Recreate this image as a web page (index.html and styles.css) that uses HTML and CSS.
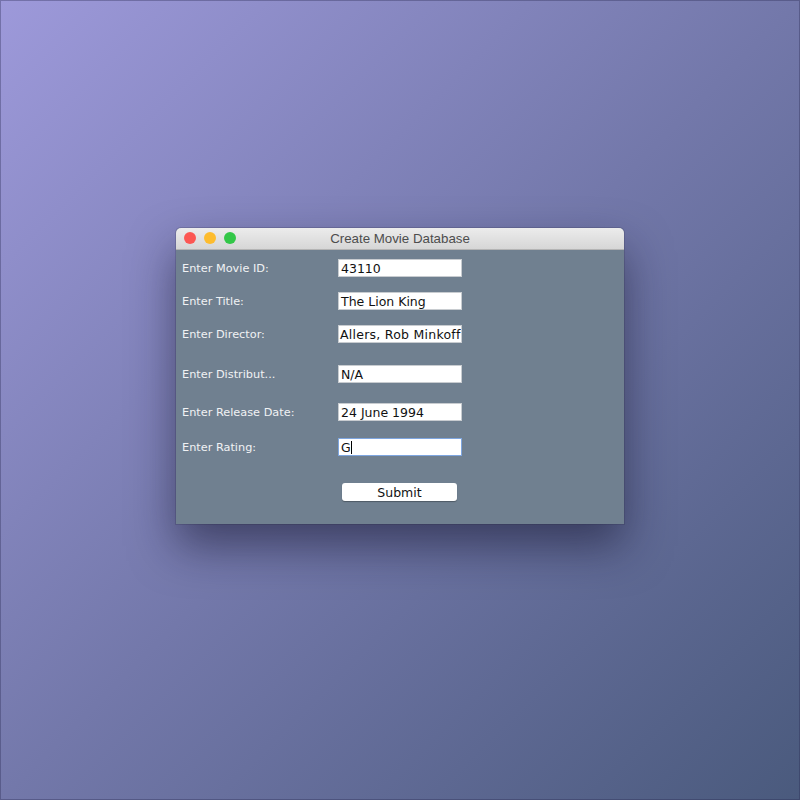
FILE: index.html
```html
<!DOCTYPE html>
<html lang="en">
<head>
    <meta charset="UTF-8">
    <title>Create Movie Database</title>
    <link rel="stylesheet" href="styles.css">
</head>
<body>
    <div class="window">
        <div class="titlebar">
            <div class="lights">
                <span class="light close"></span>
                <span class="light min"></span>
                <span class="light max"></span>
            </div>
            <div class="title">Create Movie Database</div>
        </div>

        <div class="form">
            <label class="label">Enter Movie ID:</label>
            <div class="field">43110</div>

            <label class="label">Enter Title:</label>
            <div class="field">The Lion King</div>

            <label class="label">Enter Director:</label>
            <div class="field scrolled">Allers, Rob Minkoff</div>

            <label class="label">Enter Distribut...</label>
            <div class="field">N/A</div>

            <label class="label">Enter Release Date:</label>
            <div class="field">24 June 1994</div>

            <label class="label">Enter Rating:</label>
            <div class="field focused">G<span class="caret"></span></div>

            <div class="spacer"></div>
            <button class="submit-btn">Submit</button>
        </div>
    </div>
</body>
</html>
```

FILE: styles.css
```css
* {
    margin: 0;
    padding: 0;
    box-sizing: border-box;
}

body {
    font-family: "DejaVu Sans", "Noto Sans", sans-serif;
    background: linear-gradient(135deg, #9d99da 0%, #7378aa 50%, #4a5a7d 100%);
    min-height: 100vh;
    display: flex;
    justify-content: center;
    align-items: flex-start;
    padding-top: 228px;
    box-shadow: inset 0 0 0 1px rgba(40, 40, 80, 0.35);
}

.window {
    width: 448px;
    height: 296px;
    background: #708090;
    border-radius: 5px 5px 0 0;
    box-shadow: 0 22px 45px rgba(20, 20, 45, 0.55), 0 0 0 1px rgba(60, 60, 90, 0.25);
    overflow: hidden;
}

.titlebar {
    position: relative;
    height: 22px;
    background: linear-gradient(#ececec, #d6d6d6);
    border-bottom: 1px solid #b4b4b4;
    display: flex;
    align-items: center;
    justify-content: center;
}

.lights {
    position: absolute;
    left: 8px;
    top: 4px;
    display: flex;
    gap: 8px;
}

.light {
    width: 12px;
    height: 12px;
    border-radius: 50%;
}

.light.close { background: #fc5753; }
.light.min { background: #fdbc2e; }
.light.max { background: #33c748; }

.title {
    font-family: "Liberation Sans", Arial, sans-serif;
    font-size: 13.3px;
    color: #4d4d4d;
}

.form {
    display: grid;
    grid-template-columns: 156px 124px;
    grid-template-rows: 33px 33px 40px 38px 35px 45px 18px;
    padding: 9px 0 0 6px;
    align-items: start;
}

.label {
    height: 18px;
    line-height: 20px;
    font-size: 11.3px;
    color: #f0f2f4;
}

.field {
    height: 18px;
    line-height: 18px;
    background: #fff;
    border: 1px solid #c8ccd0;
    font-size: 12.5px;
    color: #111;
    padding: 0 2px;
    white-space: nowrap;
    overflow: hidden;
}

.field.scrolled {
    padding: 0 0 0 1px;
    letter-spacing: 0.25px;
}

.field.focused {
    border-color: #7ea6e0;
}

.caret {
    display: inline-block;
    width: 1px;
    height: 13px;
    background: #000;
    vertical-align: -2px;
}

.submit-btn {
    margin-left: 4px;
    width: 115px;
    height: 18px;
    background: #fff;
    border: none;
    border-radius: 3px;
    box-shadow: 0 1px 1px rgba(0, 0, 0, 0.3);
    font-family: "DejaVu Sans", sans-serif;
    font-size: 12.5px;
    color: #111;
}
```
